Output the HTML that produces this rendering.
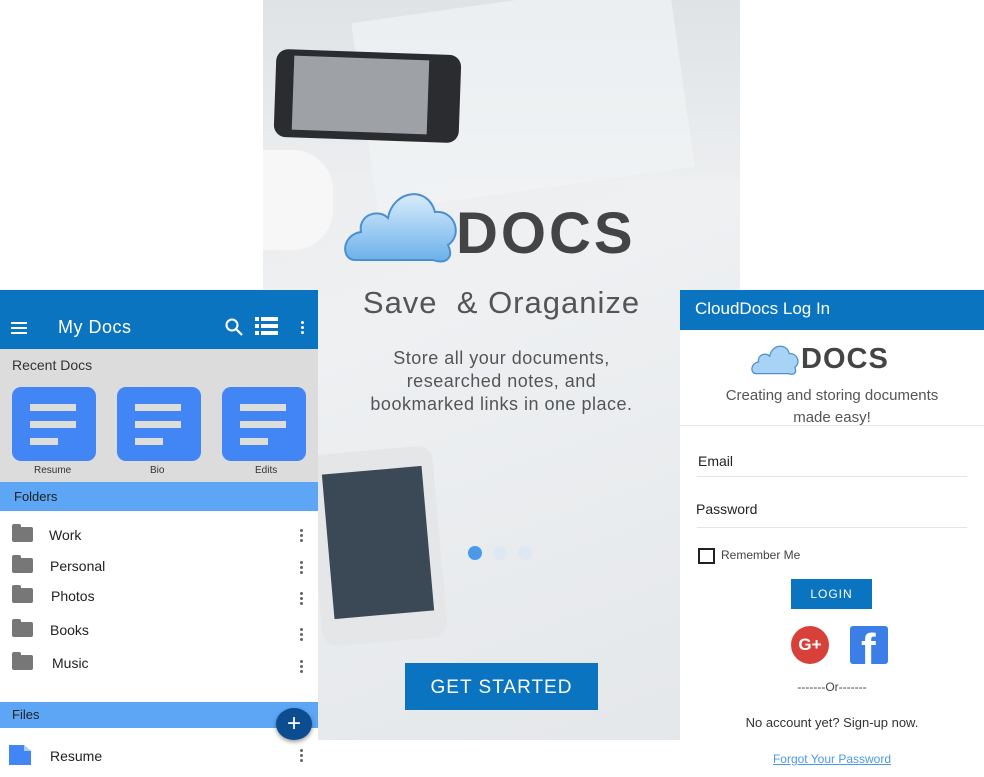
<!DOCTYPE html><html><head><style>
body{margin:0;width:984px;height:777px;background:#fff;position:relative;overflow:hidden;font-family:"Liberation Sans",sans-serif}
.a{position:absolute}
.mid{left:263px;top:0;width:477px;height:740px;background:linear-gradient(160deg,#e9ebed 0%,#eef0f2 40%,#e4e7ea 100%);overflow:hidden}
.left{left:0;top:290px;width:318px;height:487px;background:#fff}
.right{left:680px;top:290px;width:304px;height:487px;background:#fff}
.doc{width:84px;height:74px;background:#4285f4;border-radius:9px;top:97px}
.doc i{position:absolute;left:18px;height:7px;background:#ddd}
.fold{left:12px;width:21px;height:15px;background:#777;border-radius:2px}
.fold:before{content:"";position:absolute;left:0;top:-3px;width:9px;height:4px;background:#777;border-radius:2px 2px 0 0}
.dots{left:300px;width:3px;height:3px;background:#666;border-radius:50%;box-shadow:0 5px #666,0 10px #666}
.ft{left:50px;font-size:14px;color:#222}
</style></head><body>
<div class="a mid">
 <div class="a" style="left:0;top:0;width:477px;height:180px;background:linear-gradient(180deg,#dfe3e6,#eceef0)"></div>
 <div class="a" style="left:100px;top:0;width:320px;height:190px;background:#f1f3f5;transform:rotate(-8deg);opacity:.7"></div>
 <div class="a" style="left:12px;top:52px;width:185px;height:88px;background:#2a2c30;border-radius:12px;transform:rotate(2deg)"></div>
 <div class="a" style="left:30px;top:58px;width:135px;height:74px;background:#9ea2a6;transform:rotate(2deg)"></div>
 <div class="a" style="left:0;top:150px;width:70px;height:100px;background:#f7f7f7;border-radius:0 40px 40px 0"></div>
 <div class="a" style="left:52px;top:450px;width:125px;height:192px;background:#e4e6e8;border-radius:14px;transform:rotate(-5deg)"></div>
 <div class="a" style="left:65px;top:470px;width:100px;height:145px;background:#3b4856;transform:rotate(-5deg)"></div>
 <svg class="a" style="left:80px;top:180px" width="120" height="85" viewBox="0 0 120 85"><defs><linearGradient id="g" x1="0" y1="0" x2="0" y2="1"><stop offset="0" stop-color="#d8ecfb"/><stop offset="1" stop-color="#6bb0ea"/></linearGradient></defs><path d="M12 80 C-2 80 -2 55 18 52 C15 35 35 28 45 38 C50 10 85 5 92 32 C112 30 120 55 105 65 C112 80 100 84 90 80 Z" fill="url(#g)" stroke="#4b8fd0" stroke-width="2"/></svg>
 <div class="a" style="left:193px;top:200px;font-size:58px;font-weight:bold;color:#444;letter-spacing:3px">DOCS</div>
 <div class="a" style="left:0;width:477px;top:285px;text-align:center;font-size:31px;color:#555;letter-spacing:1px">Save &nbsp;&amp; Oraganize</div>
 <div class="a" style="left:0;width:477px;top:347px;text-align:center;font-size:18px;line-height:23px;color:#555;letter-spacing:.5px">Store all your documents,<br>researched notes, and<br>bookmarked links in one place.</div>
 <div class="a" style="left:205px;top:546px;width:14px;height:14px;border-radius:50%;background:#4a9ae8"></div>
 <div class="a" style="left:230px;top:546px;width:14px;height:14px;border-radius:50%;background:#dde8f2"></div>
 <div class="a" style="left:255px;top:546px;width:14px;height:14px;border-radius:50%;background:#dde8f2"></div>
 <div class="a" style="left:142px;top:663px;width:193px;height:47px;background:#0a74c0;color:#fff;font-size:19px;text-align:center;line-height:49px;letter-spacing:1px">GET STARTED</div>
</div>
<div class="a left">
 <div class="a" style="left:0;top:0;width:318px;height:59px;background:#0a74c0"></div>
 <div class="a" style="left:11px;top:32px;width:16px;height:2px;background:#fff;box-shadow:0 5px #fff,0 10px #fff"></div>
 <div class="a" style="left:58px;top:27px;font-size:18px;color:#fff;letter-spacing:.5px">My Docs</div>
 <svg class="a" style="left:224px;top:27px" width="20" height="20"><circle cx="8" cy="8" r="5.5" fill="none" stroke="#fff" stroke-width="2"/><path d="M12 12 L18 18" stroke="#fff" stroke-width="2.2"/></svg>
 <svg class="a" style="left:255px;top:27px" width="23" height="19"><g fill="#fff"><rect x="0" y="0" width="4" height="4"/><rect x="6" y="0" width="17" height="4"/><rect x="0" y="7" width="4" height="4"/><rect x="6" y="7" width="17" height="4"/><rect x="0" y="14" width="4" height="4"/><rect x="6" y="14" width="17" height="4"/></g></svg>
 <div class="a" style="left:301px;top:31px;width:3px;height:3px;background:#fff;border-radius:50%;box-shadow:0 5px #fff,0 10px #fff"></div>
 <div class="a" style="left:0;top:59px;width:318px;height:133px;background:#dcdcdc"></div>
 <div class="a" style="left:12px;top:67px;font-size:14px;color:#333">Recent Docs</div>
 <div class="a doc" style="left:12px"><i style="top:17px;width:46px"></i><i style="top:34px;width:46px"></i><i style="top:51px;width:28px"></i></div>
 <div class="a doc" style="left:117px"><i style="top:17px;width:46px"></i><i style="top:34px;width:46px"></i><i style="top:51px;width:28px"></i></div>
 <div class="a doc" style="left:222px"><i style="top:17px;width:46px"></i><i style="top:34px;width:46px"></i><i style="top:51px;width:28px"></i></div>
 <div class="a" style="left:34px;top:175px;font-size:10px;color:#333">Resume</div>
 <div class="a" style="left:150px;top:175px;font-size:10px;color:#333">Bio</div>
 <div class="a" style="left:255px;top:175px;font-size:10px;color:#333">Edits</div>
 <div class="a" style="left:0;top:192px;width:318px;height:29px;background:#5ca6f5"></div>
 <div class="a" style="left:14px;top:199px;font-size:13px;color:#222">Folders</div>
 <div class="a fold" style="top:237px"></div><div class="a ft" style="left:49px;top:237px">Work</div><div class="a dots" style="top:239px"></div>
 <div class="a fold" style="top:268px"></div><div class="a ft" style="top:268px">Personal</div><div class="a dots" style="top:271px"></div>
 <div class="a fold" style="top:298px"></div><div class="a ft" style="left:51px;top:298px">Photos</div><div class="a dots" style="top:302px"></div>
 <div class="a fold" style="top:332px"></div><div class="a ft" style="top:332px">Books</div><div class="a dots" style="top:338px"></div>
 <div class="a fold" style="top:365px"></div><div class="a ft" style="left:52px;top:365px">Music</div><div class="a dots" style="top:370px"></div>
 <div class="a" style="left:0;top:412px;width:318px;height:26px;background:#5ca6f5"></div>
 <div class="a" style="left:12px;top:417px;font-size:13px;color:#222">Files</div>
 <div class="a" style="left:276px;top:418px;width:36px;height:32px;border-radius:50%;background:#0b4d8f;color:#fff;font-size:24px;text-align:center;line-height:31px;box-shadow:0 2px 4px rgba(0,0,0,.4)">+</div>
 <svg class="a" style="left:9px;top:455px" width="22" height="20"><path d="M0 0H15L22 6V20H0Z" fill="#4285f4"/><path d="M15 0V6H22" fill="#b0cdfa"/></svg>
 <div class="a ft" style="top:458px">Resume</div><div class="a dots" style="top:459px"></div>
</div>
<div class="a right">
 <div class="a" style="left:0;top:0;width:304px;height:40px;background:#0a74c0"></div>
 <div class="a" style="left:15px;top:9px;font-size:17px;color:#fff">CloudDocs Log In</div>
 <svg class="a" style="left:71px;top:48px" width="50" height="40" viewBox="0 0 120 85"><path d="M12 80 C-2 80 -2 55 18 52 C15 35 35 28 45 38 C50 10 85 5 92 32 C112 30 120 55 105 65 C112 80 100 84 90 80 Z" fill="#a8d3f5" stroke="#4b8fd0" stroke-width="3"/></svg>
 <div class="a" style="left:121px;top:53px;font-size:29px;font-weight:bold;color:#444;letter-spacing:1px">DOCS</div>
 <div class="a" style="left:0;width:304px;top:95px;text-align:center;font-size:15px;line-height:22px;color:#555">Creating and storing documents<br>made easy!</div>
 <div class="a" style="left:0;top:135px;width:304px;height:1px;background:#e4e4e4"></div>
 <div class="a" style="left:18px;top:163px;font-size:14px;color:#222">Email</div>
 <div class="a" style="left:17px;top:186px;width:270px;height:1px;background:#e4e4e4"></div>
 <div class="a" style="left:16px;top:211px;font-size:14px;color:#222">Password</div>
 <div class="a" style="left:17px;top:237px;width:270px;height:1px;background:#e4e4e4"></div>
 <div class="a" style="left:18px;top:258px;width:13px;height:12px;border:2px solid #222"></div>
 <div class="a" style="left:41px;top:258px;font-size:12px;color:#444">Remember Me</div>
 <div class="a" style="left:111px;top:289px;width:81px;height:30px;background:#0a74c0;color:#fff;font-size:12px;text-align:center;line-height:31px;letter-spacing:1px">LOGIN</div>
 <div class="a" style="left:111px;top:336px;width:38px;height:38px;border-radius:50%;background:#d8413a;color:#fff;font-weight:bold;font-size:17px;text-align:center;line-height:38px">G+</div>
 <div class="a" style="left:170px;top:336px;width:38px;height:38px;border-radius:3px;background:#3b7ee8;overflow:hidden"><div class="a" style="left:11px;top:2px;font-size:44px;font-weight:bold;color:#fff;line-height:44px">f</div></div>
 <div class="a" style="left:0;width:304px;top:390px;text-align:center;font-size:12px;color:#444">-------Or-------</div>
 <div class="a" style="left:0;width:304px;top:425px;text-align:center;font-size:13px;color:#333">No account yet? Sign-up now.</div>
 <div class="a" style="left:0;width:304px;top:462px;text-align:center;font-size:12px;color:#4a9ae8;text-decoration:underline">Forgot Your Password</div>
</div>
</body></html>
